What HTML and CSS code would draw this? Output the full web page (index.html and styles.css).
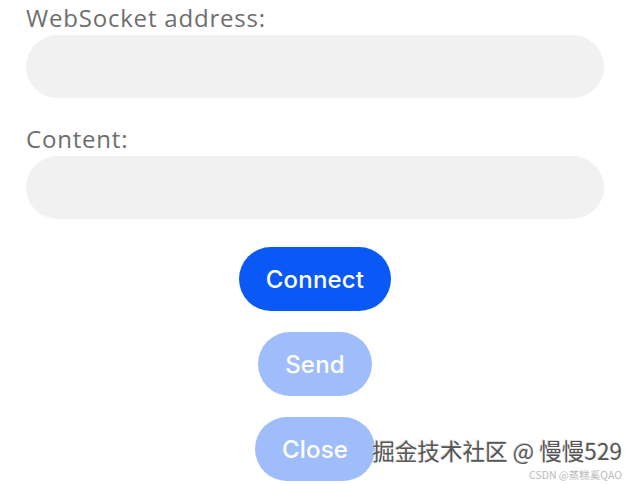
FILE: index.html
```html
<!DOCTYPE html>
<html lang="en">
<head>
  <meta charset="UTF-8">
  <meta name="viewport" content="width=device-width, initial-scale=1.0">
  <title>WebSocket</title>
  <link rel="stylesheet" href="styles.css">
</head>
<body>
  <div class="container">
    <div class="field">
      <label for="address">WebSocket address:</label>
      <input type="text" id="address">
    </div>

    <div class="field">
      <label for="content">Content:</label>
      <input type="text" id="content">
    </div>

    <div class="actions">
      <button class="btn connect">Connect</button>
      <button class="btn off">Send</button>
      <button class="btn off">Close</button>
    </div>
  </div>

  <div class="mark">
    <span class="mark-main">掘金技术社区 @ 慢慢529</span>
    <span class="mark-sub">CSDN @蒸糕奚QAO</span>
  </div>
</body>
</html>
```

FILE: styles.css
```css
*{
    margin: 0;
    padding: 0;
    box-sizing: border-box;
    outline: none;
}

body{
    width: 630px;
    height: 484px;
    background: white;
    font-family: "Open Sans", "Noto Sans", "Noto Sans CJK SC", sans-serif;
    position: relative;
    overflow: hidden;
}

.container{
    padding: 0 26px;
    display: flex;
    flex-direction: column;
}

.field{
    display: flex;
    flex-direction: column;
    margin-bottom: 23px;
}

.field label{
    font-size: 24px;
    line-height: 35px;
    height: 35px;
    letter-spacing: 0.8px;
    color: #6e6e6e;
}

.field input{
    width: 100%;
    height: 63px;
    border: none;
    border-radius: 32px;
    background: #f1f1f1;
    padding: 0 20px;
    font-size: 22px;
}

.actions{
    display: flex;
    flex-direction: column;
    align-items: center;
    gap: 21px;
    margin-top: 5px;
}

.btn{
    height: 64px;
    border: none;
    border-radius: 32px;
    font-family: Inter, "Open Sans", sans-serif;
    font-size: 24px;
    font-weight: 500;
    letter-spacing: 0.2px;
    color: white;
    padding: 0 27px;
}

.connect{
    background: #0a59f7;
}

.off{
    background: #9fbdfa;
}

.mark{
    position: absolute;
    right: 8px;
    bottom: 2px;
    display: flex;
    flex-direction: column;
    align-items: flex-end;
}

.mark-main{
    font-family: "Noto Sans CJK SC", sans-serif;
    font-size: 22.6px;
    line-height: 33px;
    color: #555;
    text-shadow: 1px 1px 0 #fff, -1px -1px 0 #ddd;
}

.mark-sub{
    font-family: "Noto Sans CJK SC", sans-serif;
    font-size: 10.5px;
    line-height: 15px;
    color: #bbb;
}
```
